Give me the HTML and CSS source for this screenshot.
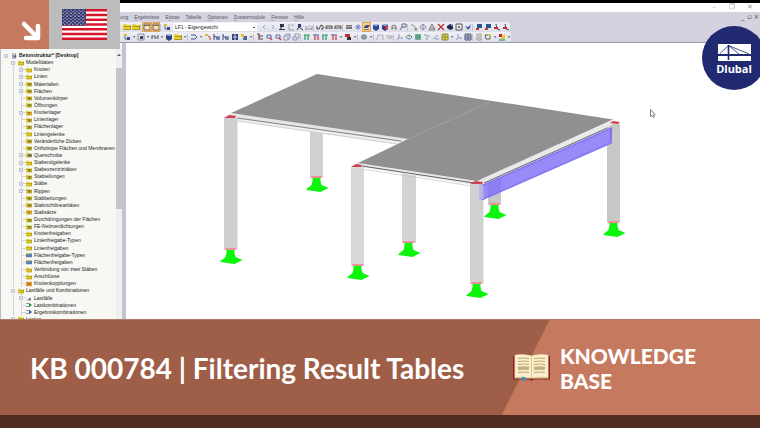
FILE: index.html
```html
<!DOCTYPE html>
<html lang="en">
<head>
<meta charset="utf-8">
<title>KB 000784 | Filtering Result Tables</title>
<link rel="stylesheet" href="styles.css">
</head>
<body>
<main class="app">
  <header class="titlebar">
    <button aria-label="Minimize">–</button>
    <button aria-label="Restore">❐</button>
    <button aria-label="Close">✕</button>
  </header>
  <nav class="menubar">
    <a href="#">ung</a><a href="#"><u>E</u>rgebnisse</a><a href="#">E<u>x</u>tras</a><a href="#"><u>T</u>abelle</a><a href="#"><u>O</u>ptionen</a><a href="#"><u>Z</u>usatzmodule</a><a href="#"><u>F</u>enster</a><a href="#"><u>H</u>ilfe</a>
    <span class="mdi"><button aria-label="Minimize document">_</button><button aria-label="Restore document">▫</button><button aria-label="Close document">×</button></span>
  </nav>
  <div class="toolbars">
    <div class="toolbar">
      <div class="group" data-icons="folder folder | win* win* | node"></div>
      <select class="loadcase" aria-label="Load case"><option>LF1 - Eigengewicht</option></select>
      <div class="group" data-icons="prev next flag axis load dims | glasses bed bed | grid star slab* cube2 cubered tower search | bend ring cone cross ball frame bird | pcblue pcblue pin pin"></div>
    </div>
    <div class="toolbar">
      <div class="group" data-icons="node . square . step . cube folder . | curve . key bars bars boxh star2 . | cart zoomr zoomr wire wire2 | tgreen tred tgreen tred . redblk . | globe . | gate beam | axes ring2 mesh fork ramp grid2 . axes table | sheet sheet2 . chart ."></div>
    </div>
  </div>
  <div class="workspace">
    <aside class="navigator">
      <ul class="tree" id="tree"></ul>
      <div class="scroll"><span class="thumb"></span></div>
    </aside>
    <section class="viewport">
      <svg class="model" viewBox="126 43 634 276" preserveAspectRatio="xMidYMin meet" role="img" aria-label="Slab on columns">
        <defs>
          <linearGradient id="col"><stop offset="0" stop-color="#cfcfcf"/><stop offset=".3" stop-color="#d8d8d8"/><stop offset=".68" stop-color="#d0d0d0"/><stop offset=".72" stop-color="#bdbdbd"/><stop offset="1" stop-color="#c9c9c9"/></linearGradient>
          <g id="support">
            <path d="M-4 1h8v3l1 4 7 3-8 4-14-2v-1l5-4 1-4z" fill="#0cf50c"/>
            <path d="M-6.500 1l2-2h10l1 1-2 1z" fill="#ef8f98"/>
          </g>
        </defs>
        <g fill="url(#col)">
          <path d="M310 130h13v47h-13zM402 172h14v71h-14zM488 185h13v19h-13z"/>
        </g>
        <path d="M228 116l2-3 178 26-5 5-175-25z" fill="#e6e6e6"/>
        <path d="M228 118l175 25M236 120l165 24" stroke="#efefef" stroke-width="2"/>
        <path d="M237 118l164 23" stroke="#686868" stroke-width=".8"/>
        <path d="M237 121l160 23" stroke="#bbb" stroke-width=".6"/>
        <path d="M354 165l3-3 120 18 137-60 5 3-8 5-131 58-119-19z" fill="#e9e9e9"/>
        <path d="M362 166l112 17M484 183l130-58" stroke="#646464" stroke-width="1"/>
        <path d="M362 169l110 17M484 187l128-58" stroke="#bcbcbc" stroke-width=".6"/>
        <path d="M317 74l296 45.500-136 61.500-119-18 50-24-177-26z" fill="#909090"/>
        <path d="M408 139l82-37" stroke="#a9a9a9" stroke-width=".7"/>
        <g fill="url(#col)">
          <path d="M224 118h13.500v131H224zM351 167h13v98h-13zM607 128l5-4h8v98h-13zM470 184h13.500v99H470z"/>
        </g>
        <path d="M479 185l5-1 128-57v3l-1 12 1 1-129 57-4-1z" fill="#968bf8"/>
        <path d="M482 186l2-1 128-57M482 199.500L612 142.500" fill="none" stroke="#857af3" stroke-width="1.500"/>
        <path d="M488 184l13-6v14l-13 6z" fill="#7468e6" opacity=".3"/>
        <path d="M479 185h4.500v14H479z" fill="#b8b4e4"/>
        <path d="M611 129v13" stroke="#5e54dc"/>
        <g fill="#cf4052"><path d="M224 118l5-3 7 1-1 2zM351 167l5-3 6 1-1 2zM470 184l5-3 8 1-1 2zM610 123l3-2 7 1-2 2z"/></g>
        <use href="#support" x="230.500" y="249"/><use href="#support" x="316.500" y="177"/><use href="#support" x="357.500" y="265"/><use href="#support" x="408.500" y="242"/><use href="#support" x="476.500" y="283"/><use href="#support" x="494.500" y="204"/><use href="#support" x="613.500" y="222"/>
        <path d="M650.500 109.500v7l1.500-1.200 1.200 2.200 1.200-.6-1-2.200h1.700z" fill="#fff" stroke="#666" stroke-width=".8"/>
      </svg>
    </section>
  </div>
  <div class="badges">
    <div class="arrow"><svg viewBox="0 0 49 49"><path d="M24 24l14 14M26 38h12V26" fill="none" stroke="#fff" stroke-width="4.500" stroke-linecap="round" stroke-linejoin="round"/></svg></div>
    <div class="flagbox">
      <svg viewBox="0 0 45 31" role="img" aria-label="United States">
        <defs><pattern id="stars" width="4" height="3.200" patternUnits="userSpaceOnUse"><circle cx="1" cy=".9" r=".6" fill="#fff"/><circle cx="3" cy="2.500" r=".6" fill="#fff"/></pattern></defs>
        <path fill="#fff" d="M0 0h45v31H0z"/>
        <path d="M0 1.200h45M0 6h45M0 10.700h45M0 15.500h45M0 20.300h45M0 25h45M0 29.800h45" stroke="#d8152b" stroke-width="2.400"/>
        <path fill="#33366e" d="M0 0h24v16.500H0z"/><path fill="url(#stars)" d="M.5.5h23v15.500H.5z"/>
      </svg>
    </div>
  </div>
  <div class="brand">
    <svg viewBox="0 0 33 17"><path fill="#fff" d="M0 0h33v10H0zM0 12h33v5H0z"/><path d="M1.500 10L10.500 1.500 31 10M10.500 1.500L21 10" fill="none" stroke="#212a70" stroke-width=".8"/><path d="M10.500 1v15" stroke="#212a70" stroke-width="1.600"/></svg>
    <strong>Dlubal</strong>
  </div>
</main>
<section class="banner">
  <h1>KB 000784 | Filtering Result Tables</h1>
  <div class="category">
    <svg class="book" viewBox="0 0 37 27"><path fill="#8c2424" d="M0 2h37v23.500H21q-2.500 2-5 0H0z"/><path fill="#ddc998" d="M1.500 1.500h34v23h-34z"/><path fill="#fbefcb" d="M2 1q9-2 16.500 1Q26 -1 35 1v22q-9-1.500-16.500 1Q11 21.500 2 23z"/><path d="M18.500 2v22" stroke="#dac795"/><path d="M5 4.500q6-1 11 0M5 7.500q6-1 11 0M5 10.500q6-1 11 0M5 18.500q6-1 11 0M21 4.500q6-1 11 0M21 7.500q6-1 11 0M21 10.500q6-1 11 0M21 18.500q6-1 11 0" fill="none" stroke="#bba777" stroke-width="1"/><path d="M5 14.500q6-1 11 0M21 14.500q6-1 11 0" fill="none" stroke="#c4b180" stroke-width="3.500"/><path fill="#139bd0" d="M9 23h3v4l-1.500-1L9 27z"/></svg>
    <h2>KNOWLEDGE<br>BASE</h2>
  </div>
</section>
<footer class="strip"></footer>
<script src="app.js"></script>
</body>
</html>
```
FILE: styles.css
```css
* { box-sizing: border-box; }
body {
  margin: 0;
  min-height: 100vh;
  display: flex;
  flex-direction: column;
  font-family: "Liberation Sans", Arial, sans-serif;
  overflow: hidden;
}
button {
  border: 0;
  padding: 0;
  background: none;
  font: inherit;
  color: inherit;
}
.app {
  position: relative;
  flex: 1 1 0;
  min-height: 0;
  display: flex;
  flex-direction: column;
  background: #d3d2de;
  overflow: hidden;
}
.titlebar {
  flex: none;
  height: 12px;
  border-top: 3px solid #000;
  background: #fff;
  display: flex;
  justify-content: flex-end;
  align-items: center;
  padding-right: 1px;
  font: 7px/9px "DejaVu Sans", sans-serif;
  color: #999;
}
.titlebar button { width: 18px; }
.menubar {
  flex: none;
  height: 10px;
  display: flex;
  align-items: center;
  gap: 6px;
  padding-left: 120px;
  font-size: 5px;
  line-height: 10px;
}
.menubar a { color: #55545e; text-decoration: none; }
.menubar u { text-decoration-thickness: 1px; text-decoration-color: #adacb8; }
.mdi {
  margin-left: auto;
  display: flex;
  font: 7px/8px "DejaVu Sans", sans-serif;
  color: #555;
}
.mdi button { width: 7px; }
.toolbars {
  flex: none;
  display: flex;
  flex-direction: column;
  align-items: flex-start;
  height: 21px;
  border-bottom: 1px solid #9a9aa6;
}
.toolbar {
  display: flex;
  align-items: center;
  height: 10px;
  padding-left: 122px;
  background: linear-gradient(#f0f0f6, #dddde8);
  border-radius: 0 3px 3px 0;
}
.group { display: flex; align-items: center; }
.tool {
  flex: none;
  width: 9px;
  height: 10px;
  display: grid;
  place-items: center;
}
.tool svg { width: 8px; height: 8px; display: block; }
.tool.on { background: #f9cf8c; outline: 1px solid #dda45c; outline-offset: -1px; }
.drop {
  flex: none;
  width: 5px;
  height: 10px;
  color: #555;
  font-size: 4px;
  line-height: 10px;
  text-align: center;
}
.sep {
  flex: none;
  width: 1px;
  height: 7px;
  margin-right: 1px;
  background: #c4c4d0;
}
.loadcase {
  appearance: none;
  width: 84px;
  height: 8px;
  margin: 0 2px;
  padding: 0 2px;
  border: 0;
  border-radius: 0;
  background: linear-gradient(#555, #555) right 2px center / 2px 1px no-repeat, #fff;
  color: #222;
  font: 5px/8px "Liberation Sans", sans-serif;
}
.workspace {
  flex: 1;
  min-height: 0;
  display: grid;
  grid-template-columns: 126px 1fr;
}
.navigator {
  display: flex;
  min-height: 0;
  padding: 6px 0 0 1px;
  background: #f7f7f4;
  border-left: 1px solid #b9bac8;
  border-right: 4px solid #c3c4d2;
}
.tree {
  flex: 1;
  min-width: 0;
  list-style: none;
  margin: 3px 0 -4px;
  padding: 0;
  display: grid;
  grid-auto-rows: 1fr;
  font-size: 5px;
  line-height: 7px;
  color: #1c1c1c;
}
.tree li {
  display: flex;
  align-items: center;
  white-space: nowrap;
  min-height: 0;
}
.tree .l0 { padding-left: 2px; font-weight: bold; }
.tree .l1 { padding-left: 9px; }
.tree .l2 {
  padding-left: 17px;
  background:
    linear-gradient(#d4d4d4, #d4d4d4) 11px 0 / 1px 100% no-repeat,
    linear-gradient(#d4d4d4, #d4d4d4) 19px 0 / 1px 100% no-repeat,
    linear-gradient(#d4d4d4, #d4d4d4) 19px 3px / 5px 1px no-repeat;
}
.exp {
  width: 4px;
  height: 4px;
  margin-right: 3px;
}
.exp.box {
  border: 1px solid #c4c8d2;
  background: #dfe2e9;
}
.tree svg { width: 6px; height: 6px; margin-right: 2px; }
.scroll {
  position: relative;
  width: 6px;
  padding-top: 19px;
  background: #efefef;
}
.scroll .thumb { display: block; height: 56%; background: #c6c6c6; }
.scroll::before {
  content: "";
  position: absolute;
  top: 5px;
  left: 1px;
  border: 2px solid transparent;
  border-top: 0;
  border-bottom: 2px solid #555;
}
.viewport { background: #fff; min-width: 0; min-height: 0; }
.model { display: block; width: 100%; height: 100%; }
.badges {
  position: absolute;
  top: 0;
  left: 0;
  display: flex;
  height: 49px;
}
.arrow { width: 49px; background: #c5795e; }
.arrow svg { display: block; }
.flagbox {
  width: 71px;
  background: #bcbcbc;
  display: grid;
  place-items: center;
}
.flagbox svg { width: 45px; height: 31px; }
.brand {
  position: absolute;
  top: 26px;
  right: -6px;
  width: 64px;
  height: 64px;
  border-radius: 50%;
  background: #212a70;
  color: #fff;
  display: flex;
  flex-direction: column;
  align-items: center;
  padding-top: 18px;
}
.brand svg { width: 33px; height: 17px; }
.brand strong { font: bold 11px/15px "Open Sans", sans-serif; }
.banner {
  flex: none;
  display: grid;
  grid-template-columns: minmax(0, 503fr) minmax(0, 257fr);
  align-items: stretch;
  min-height: 96px;
  background: #9f5e48;
  position: relative;
  color: #fff;
  font-family: Lato, sans-serif;
  border-top: 1px solid #b27a67;
}
.banner::before {
  content: "";
  position: absolute;
  inset: 0 0 0 auto;
  width: 34%;
  background: #c5795e;
  clip-path: polygon(48px 0, 100% 0, 100% 100%, 0 100%);
}
.banner h1 {
  margin: 0;
  padding-left: 30px;
  align-self: center;
  white-space: nowrap;
  font-size: 28px;
  line-height: 32px;
  font-weight: bold;
}
.category {
  position: relative;
  display: flex;
  align-items: center;
  gap: 10px;
  padding-left: 10px;
}
.book { width: 37px; height: 27px; }
.category h2 {
  margin: 0;
  font-size: 21px;
  line-height: 25px;
  font-weight: 900;
}
.strip { flex: none; height: 13px; background: #512b20; }
```
FILE: app.js
```js
// Tool and tree glyphs, drawn on an 8 x 8 grid.
const p = (d, fill) => `<path d="${d}" fill="${fill}"/>`;
const s = (d, stroke, w = 1) => `<path d="${d}" fill="none" stroke="${stroke}" stroke-width="${w}"/>`;
const yellow = p("M0 2l1-1h2l1 1h4v5H0z", "#e8d230") + s("M.5 3.500h7M.5 6.500h7v-4", "#8f8018", 0.7);
const cube = (c) => p("M1 2l4-1 2 1v4L4 8 1 6z", c) + p("M1 2l4-1 2 1-3 1z", "#a9c3e8");
const glyphs = {
  cube: cube("#33436f"), cube2: cube("#2a4a9c"),
  cubered: cube("#2a3a8c") + p("M4 3h3v3H4z", "#d33"),
  folder: yellow,
  win: p("M1 1h6v6H1z", "#f3e3c4") + s("M1 1h6v6H1zM1 2.500h6", "#7b6750"),
  node: s("M2 2v4h5", "#567") + p("M4 4h3v3H4z", "#3a4a90") + p("M1 1h3v2H1z", "#d8bb30"),
  prev: s("M5 2L3 4l2 2", "#9aa4c4"), next: s("M3 2l2 2-2 2", "#9aa4c4"),
  flag: p("M2 1h4v3H2zM1 6h6v1H1z", "#2b3a66") + s("M3 1v6", "#223"),
  axis: s("M2 1v6h5M4 2h3", "#9a9db0"),
  load: p("M2 1h3v3H2z", "#2b3a86") + s("M1 7l2-3 4 3", "#334"),
  dims: s("M1 6h6M1 3v4M7 3v4M3 3h2", "#8b8fa4"),
  glasses: s("M1 3v3h2l2-4 2 1v3H5", "#444"),
  bed: s("M1 6V3h6v3M1 5h6", "#555") + p("M2 3h4v1H2z", "#aaa470"),
  grid: p("M1 2h6v4H1z", "#777") + s("M1 3.500h6", "#c99"),
  grid2: p("M1 1h6v6H1z", "#e3d84a") + s("M1 4h6M4 1v6M1 1h6v6H1z", "#77752f", 0.8),
  star: s("M4 1v6M1 4h6M2 2l4 4M6 2L2 6", "#6679b8", 0.8),
  star2: p("M1 1h3v3H1z", "#e2c62a") + p("M4 3h3v4H3z", "#468"),
  slab: p("M1 4l2-2h4L5 5H1z", "#2f4c8f") + s("M1 6.500h5", "#777"),
  tower: s("M2 7V3l2-1 2 1v4M2 5h4", "#777"),
  search: s("M3 1h4v3H3zM3 4L1 7", "#667"),
  bend: s("M1 2h2l2 2v3h2", "#888") + p("M5 5h2v2H5z", "#6a6"),
  ring: s("M1 4q3-5 6 0q-3 5-6 0M4 1v6", "#8a7aa8", 0.9),
  ring2: s("M1 4q3-4 6 0q-3 4-6 0", "#2b8fb8") + p("M3 2h2v2H3z", "#e0ac30"),
  cone: s("M4 1L1 7h6zM2 5h4", "#777"),
  cross: s("M1 1l6 6M7 1L1 7", "#b8302c", 1.200),
  ball: p("M4 1l3 2v3L4 7 1 5V3z", "#23284c") + p("M5 1h2v2H5z", "#89b"),
  frame: s("M1 1h6v6H1z", "#555") + p("M3 3h2v2H3z", "#777"),
  bird: p("M1 3l3 1 3-3-1 4-2 2z", "#51659c"),
  pcblue: p("M2 1h5v4H2z", "#24588e") + p("M1 5h3v2H1z", "#c33"),
  pin: s("M3 1l1 5 3 1", "#446") + p("M1 4h4v2H1z", "#c22838"),
  square: s("M1 1h6v6H1z", "#8a8e9c") + p("M3 3h3v3H3z", "#445"),
  step: s("M1 6V3h3v2h3V2", "#567", 1.200),
  curve: s("M1 2h4l2 2-2 2H1", "#3a56a0"),
  key: p("M1 1h3v2H1z", "#e0bd38") + s("M4 3l2 1v3", "#c2492f"),
  bars: s("M1 1v6M4 3v4M6 3v4M1 3l5 3", "#3a4a80"),
  boxh: p("M1 1h6v6H1z", "#34467c") + s("M4 1v6M2 4h4", "#ccd"),
  cart: s("M1 1h2v5h4M3 3h4", "#604050", 1.200),
  zoomr: s("M2 2h4v3H2z", "#5b6aa0") + s("M5 5l2 2", "#c33", 1.300),
  wire: s("M1 3l2-2h4v4L5 7H1zM1 3h4v4M5 3l2-2", "#6f7cae", 0.7),
  wire2: s("M1 4h4v3H1zM3 4V1h4v4H5", "#7a83a8", 0.8),
  tgreen: s("M1 2h6M2 2v5M5 2v5", "#2a9a60", 1.200),
  tred: s("M1 2h6", "#459") + s("M3 2v5M6 3v4", "#c83440", 1.200),
  redblk: p("M1 1h5v3H1z", "#bf2f35") + p("M3 4h4v3H3z", "#333"),
  globe: p("M4 1l3 2v2L4 7 1 5V3z", "#6d7f88") + s("M1 4h6M4 1v6", "#cfd6dc", 0.5),
  gate: s("M1 7l1-5h5v5", "#a9abb8"), beam: s("M1 3h6v2H2", "#a9a49c"),
  axes: s("M3 1v4h4M3 5L1 7", "#8b96bc"),
  mesh: p("M1 1h6v6H1z", "#7cbf94") + s("M1 3h6M1 5h6M3 1v6M5 1v6", "#487f7f", 0.6),
  fork: s("M4 7V3h3M1 2h3", "#8a9", 1), ramp: s("M1 6l5-4M3 6h4", "#8a9bb0"),
  table: s("M1 1h6v6H1zM1 3h6M1 5h6M4 1v6", "#4e557c"),
  sheet: s("M2 1h4v6H2zM3 3h2M3 5h2", "#8a8a78", 0.8),
  sheet2: s("M1 2h5v4H2z", "#5d6b54") + p("M4 1h3v2H4z", "#dfc246"),
  chart: p("M1 1h3v3H1z", "#c5232a") + p("M4 3l3-2v5H3z", "#e5cb24") + s("M1 7h6", "#2a7e38"),
  home: s("M2 1h4v6H2z", "#7e8698") + p("M3 3h4v3H3z", "#54688e"),
  tag: yellow + p("M3 3h3v3H3z", "#6a7040"),
  blue: yellow + p("M3 3h4v3H3z", "#3d55b0"),
  red: yellow + p("M3 3h2v3H3z", "#cc4030"),
  steel: p("M0 2h8v5H0z", "#5f7dae") + p("M1 1h3v2H1z", "#e8d230"),
  kop: p("M0 1h8v6H0z", "#e5ae38") + s("M1 2l6 4M7 2L1 6", "#b03a28"),
  lf: s("M1 6.500h6", "#555") + p("M4 4h2v2H4z", "#3040a0"),
  lk: s("M0 2h4M0 6h4", "#777") + p("M4 1l4 3-4 3z", "#239a4a"),
  ek: s("M0 2h4M0 6h4", "#777") + p("M4 1l4 3-4 3z", "#2858b8")
};
const svg = (n) => `<svg viewBox="0 0 8 8" aria-hidden="true">${glyphs[n]}</svg>`;

document.querySelectorAll("[data-icons]").forEach((group) => {
  group.innerHTML = group.dataset.icons.split(" ").map((t) => {
    if (t === "|") return '<span class="sep"></span>';
    if (t === ".") return '<span class="drop">▾</span>';
    const on = t.endsWith("*");
    const name = on ? t.slice(0, -1) : t;
    return `<button class="tool${on ? " on" : ""}" aria-label="${name}">${svg(name)}</button>`;
  }).join("");
});

// level, expandable, glyph, label
const rows = [
  [0, 1, "home", "Betonstruktur* [Desktop]"], [1, 1, "folder", "Modelldaten"],
  [2, 1, "folder", "Knoten"], [2, 1, "folder", "Linien"], [2, 1, "tag", "Materialien"],
  [2, 1, "tag", "Flächen"], [2, 0, "tag", "Volumenkörper"], [2, 0, "tag", "Öffnungen"],
  [2, 1, "red", "Knotenlager"], [2, 0, "tag", "Linienlager"], [2, 0, "tag", "Flächenlager"],
  [2, 0, "folder", "Liniengelenke"], [2, 0, "tag", "Veränderliche Dicken"],
  [2, 0, "tag", "Orthotrope Flächen und Membranen"], [2, 1, "blue", "Querschnitte"],
  [2, 1, "folder", "Stabendgelenke"], [2, 1, "tag", "Stabexzentrizitäten"],
  [2, 0, "tag", "Stabteilungen"], [2, 1, "folder", "Stäbe"], [2, 1, "tag", "Rippen"],
  [2, 0, "tag", "Stabbettungen"], [2, 0, "tag", "Stabnichtlinearitäten"],
  [2, 0, "red", "Stabsätze"], [2, 0, "tag", "Durchdringungen der Flächen"],
  [2, 0, "tag", "FE-Netzverdichtungen"], [2, 0, "folder", "Knotenfreigaben"],
  [2, 0, "folder", "Linienfreigabe-Typen"], [2, 0, "folder", "Linienfreigaben"],
  [2, 0, "steel", "Flächenfreigabe-Typen"], [2, 0, "steel", "Flächenfreigaben"],
  [2, 0, "folder", "Verbindung von zwei Stäben"], [2, 0, "folder", "Anschlüsse"],
  [2, 0, "kop", "Knotenkopplungen"], [1, 1, "folder", "Lastfälle und Kombinationen"],
  [2, 1, "lf", "Lastfälle"], [2, 0, "lk", "Lastkombinationen"],
  [2, 0, "ek", "Ergebniskombinationen"], [1, 1, "folder", "Lasten"]
];
document.getElementById("tree").innerHTML = rows.map(([level, open, glyph, label]) =>
  `<li class="l${level}"><span class="exp${open ? " box" : ""}"></span>${svg(glyph)}<span>${label}</span></li>`
).join("");
```
